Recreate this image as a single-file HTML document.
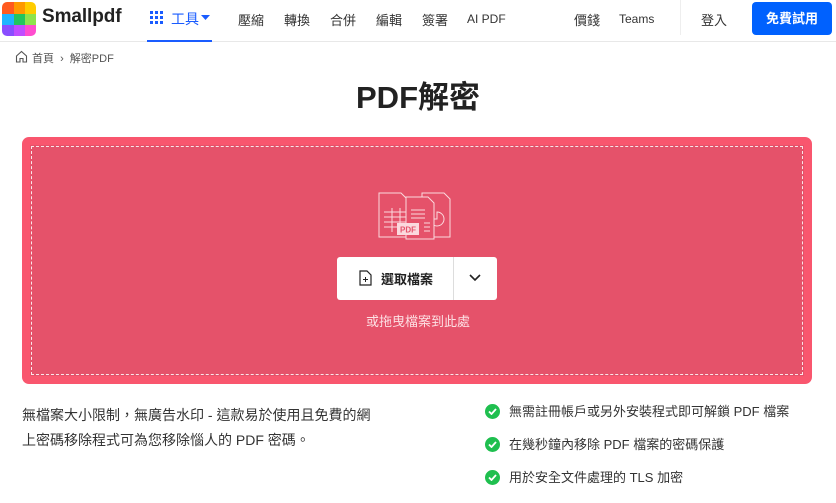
<!DOCTYPE html>
<html><head><meta charset="utf-8"><style>
*{margin:0;padding:0;box-sizing:border-box}
body{width:836px;height:500px;overflow:hidden;background:#fff;font-family:"Liberation Sans","Noto Sans CJK TC",sans-serif;color:#222;position:relative}
.a{position:absolute}
.nav{font-size:13px;color:#333;top:10px}
</style></head><body>
<div class="a" style="left:0;top:0;width:836px;height:42px;border-bottom:1px solid #e8e8e8"></div>
<svg class="a" style="left:2px;top:2px" width="34" height="34" viewBox="0 0 34 34">
<defs><clipPath id="c"><rect width="34" height="34" rx="5"/></clipPath></defs>
<g clip-path="url(#c)">
<rect x="0" y="0" width="12" height="12" fill="#ff5a1f"/><rect x="12" y="0" width="11" height="12" fill="#ff9900"/><rect x="23" y="0" width="11" height="12" fill="#ffcc00"/>
<rect x="0" y="12" width="12" height="11" fill="#1eb4ff"/><rect x="12" y="12" width="11" height="11" fill="#22c55e"/><rect x="23" y="12" width="11" height="11" fill="#8ee34c"/>
<rect x="0" y="23" width="12" height="11" fill="#8a4dff"/><rect x="12" y="23" width="11" height="11" fill="#c04dff"/><rect x="23" y="23" width="11" height="11" fill="#ff4dcf"/>
</g></svg>
<div class="a" style="left:42px;top:6px;font-size:19px;font-weight:bold;color:#222;letter-spacing:-0.1px">Smallpdf</div>
<svg class="a" style="left:150px;top:11px" width="13" height="13"><g fill="#1a5cff"><rect x="0" y="0" width="3" height="3"/><rect x="5" y="0" width="3" height="3"/><rect x="10" y="0" width="3" height="3"/><rect x="0" y="5" width="3" height="3"/><rect x="5" y="5" width="3" height="3"/><rect x="10" y="5" width="3" height="3"/><rect x="0" y="10" width="3" height="3"/><rect x="5" y="10" width="3" height="3"/><rect x="10" y="10" width="3" height="3"/></g></svg>
<div class="a nav" style="left:171px;color:#1a5cff;font-size:14px;top:9px">工具</div>
<svg class="a" style="left:201px;top:15px" width="9" height="5"><path d="M0 0h9L4.5 5z" fill="#1a5cff"/></svg>
<div class="a" style="left:147px;top:40px;width:65px;height:2px;background:#1a5cff"></div>
<div class="a nav" style="left:238px">壓縮</div>
<div class="a nav" style="left:284px">轉換</div>
<div class="a nav" style="left:330px">合併</div>
<div class="a nav" style="left:376px">編輯</div>
<div class="a nav" style="left:422px">簽署</div>
<div class="a nav" style="left:467px;font-size:12px;top:12px">AI PDF</div>
<div class="a nav" style="left:574px">價錢</div>
<div class="a nav" style="left:619px;font-size:12px;top:12px">Teams</div>
<div class="a" style="left:680px;top:0;width:1px;height:35px;background:#eee"></div>
<div class="a nav" style="left:701px">登入</div>
<div class="a" style="left:752px;top:2px;width:80px;height:33px;background:#0061fe;border-radius:4px;color:#fff;font-size:13px;font-weight:bold;text-align:center;line-height:33px">免費試用</div>
<svg class="a" style="left:15px;top:50px" width="13" height="13" viewBox="0 0 13 13"><path d="M1.5 6L6.5 1.5 11.5 6V12H8V8.5H5V12H1.5z" fill="none" stroke="#555" stroke-width="1.1"/></svg>
<div class="a" style="left:32px;top:50px;font-size:11px;color:#555">首頁 <span style="margin:0 3px">›</span> 解密PDF</div>
<div class="a" style="left:0;width:836px;top:72px;text-align:center;font-size:31px;font-weight:bold;color:#222">PDF解密</div>
<div class="a" style="left:22px;top:137px;width:790px;height:247px;background:#e5526a;border:8px solid #f9566e;border-radius:7px"></div>
<div class="a" style="left:31px;top:146px;width:772px;height:229px;border:1px dashed rgba(255,255,255,.85)"></div>
<svg class="a" style="left:376px;top:190px" width="82" height="52" viewBox="0 0 82 52" fill="none" stroke="#fbd9de" stroke-width="1">
<path d="M3 3h22l6 6v38H3z"/><path d="M8 22h22M8 27h22M8 32h22M8 37h22M16 18v24M24 18v24"/>
<path d="M46 3h22l6 6v38H46z" fill="#e5526a"/><path d="M54 29a7 7 0 1 0 7-7v7z"/>
<path d="M30 7h22l6 6v36H30z" fill="#e5526a"/><path d="M35 20h14M35 24h14M35 28h14M48 33h6M48 37h6M48 41h6"/>
<rect x="21" y="33" width="22" height="12" fill="#fbd9de" stroke="none"/>
<text x="24" y="42.5" font-size="8" fill="#e5526a" stroke="none" font-family="Liberation Sans" font-weight="bold">PDF</text>
</svg>
<div class="a" style="left:337px;top:257px;width:160px;height:43px;background:#fff;border-radius:3px"></div>
<div class="a" style="left:453px;top:257px;width:1px;height:43px;background:#ddd"></div>
<svg class="a" style="left:359px;top:270px" width="13" height="16" viewBox="0 0 13 16"><path d="M1 1h7l4 4v10H1z" fill="none" stroke="#222" stroke-width="1.2"/><path d="M6.5 7v5M4 9.5h5" stroke="#222"/></svg>
<div class="a" style="left:381px;top:269px;font-size:13px;font-weight:bold;color:#222">選取檔案</div>
<svg class="a" style="left:469px;top:274px" width="12" height="8"><path d="M1 1l5 5 5-5" fill="none" stroke="#222" stroke-width="1.6"/></svg>
<div class="a" style="left:0;width:836px;top:311px;text-align:center;font-size:13px;color:#fde0e4">或拖曳檔案到此處</div>
<div class="a" style="left:22px;top:403px;width:400px;font-size:14px;line-height:25px;color:#333;white-space:nowrap">無檔案大小限制，無廣告水印 - 這款易於使用且免費的網<br>上密碼移除程式可為您移除惱人的 PDF 密碼。</div>
<div class="a" style="left:485px;top:404px;font-size:13px;color:#333;line-height:16px">
<div style="height:33px"><span style="display:inline-block;width:15px;height:15px;border-radius:50%;background:#1fbf4f;vertical-align:-3px;margin-right:9px;position:relative"><svg style="position:absolute;left:3px;top:4px" width="9" height="7"><path d="M1 3.5l2.5 2.5L8 1" fill="none" stroke="#fff" stroke-width="1.8"/></svg></span>無需註冊帳戶或另外安裝程式即可解鎖 PDF 檔案</div>
<div style="height:33px"><span style="display:inline-block;width:15px;height:15px;border-radius:50%;background:#1fbf4f;vertical-align:-3px;margin-right:9px;position:relative"><svg style="position:absolute;left:3px;top:4px" width="9" height="7"><path d="M1 3.5l2.5 2.5L8 1" fill="none" stroke="#fff" stroke-width="1.8"/></svg></span>在幾秒鐘內移除 PDF 檔案的密碼保護</div>
<div style="height:33px"><span style="display:inline-block;width:15px;height:15px;border-radius:50%;background:#1fbf4f;vertical-align:-3px;margin-right:9px;position:relative"><svg style="position:absolute;left:3px;top:4px" width="9" height="7"><path d="M1 3.5l2.5 2.5L8 1" fill="none" stroke="#fff" stroke-width="1.8"/></svg></span>用於安全文件處理的 TLS 加密</div>
</div>
</body></html>
